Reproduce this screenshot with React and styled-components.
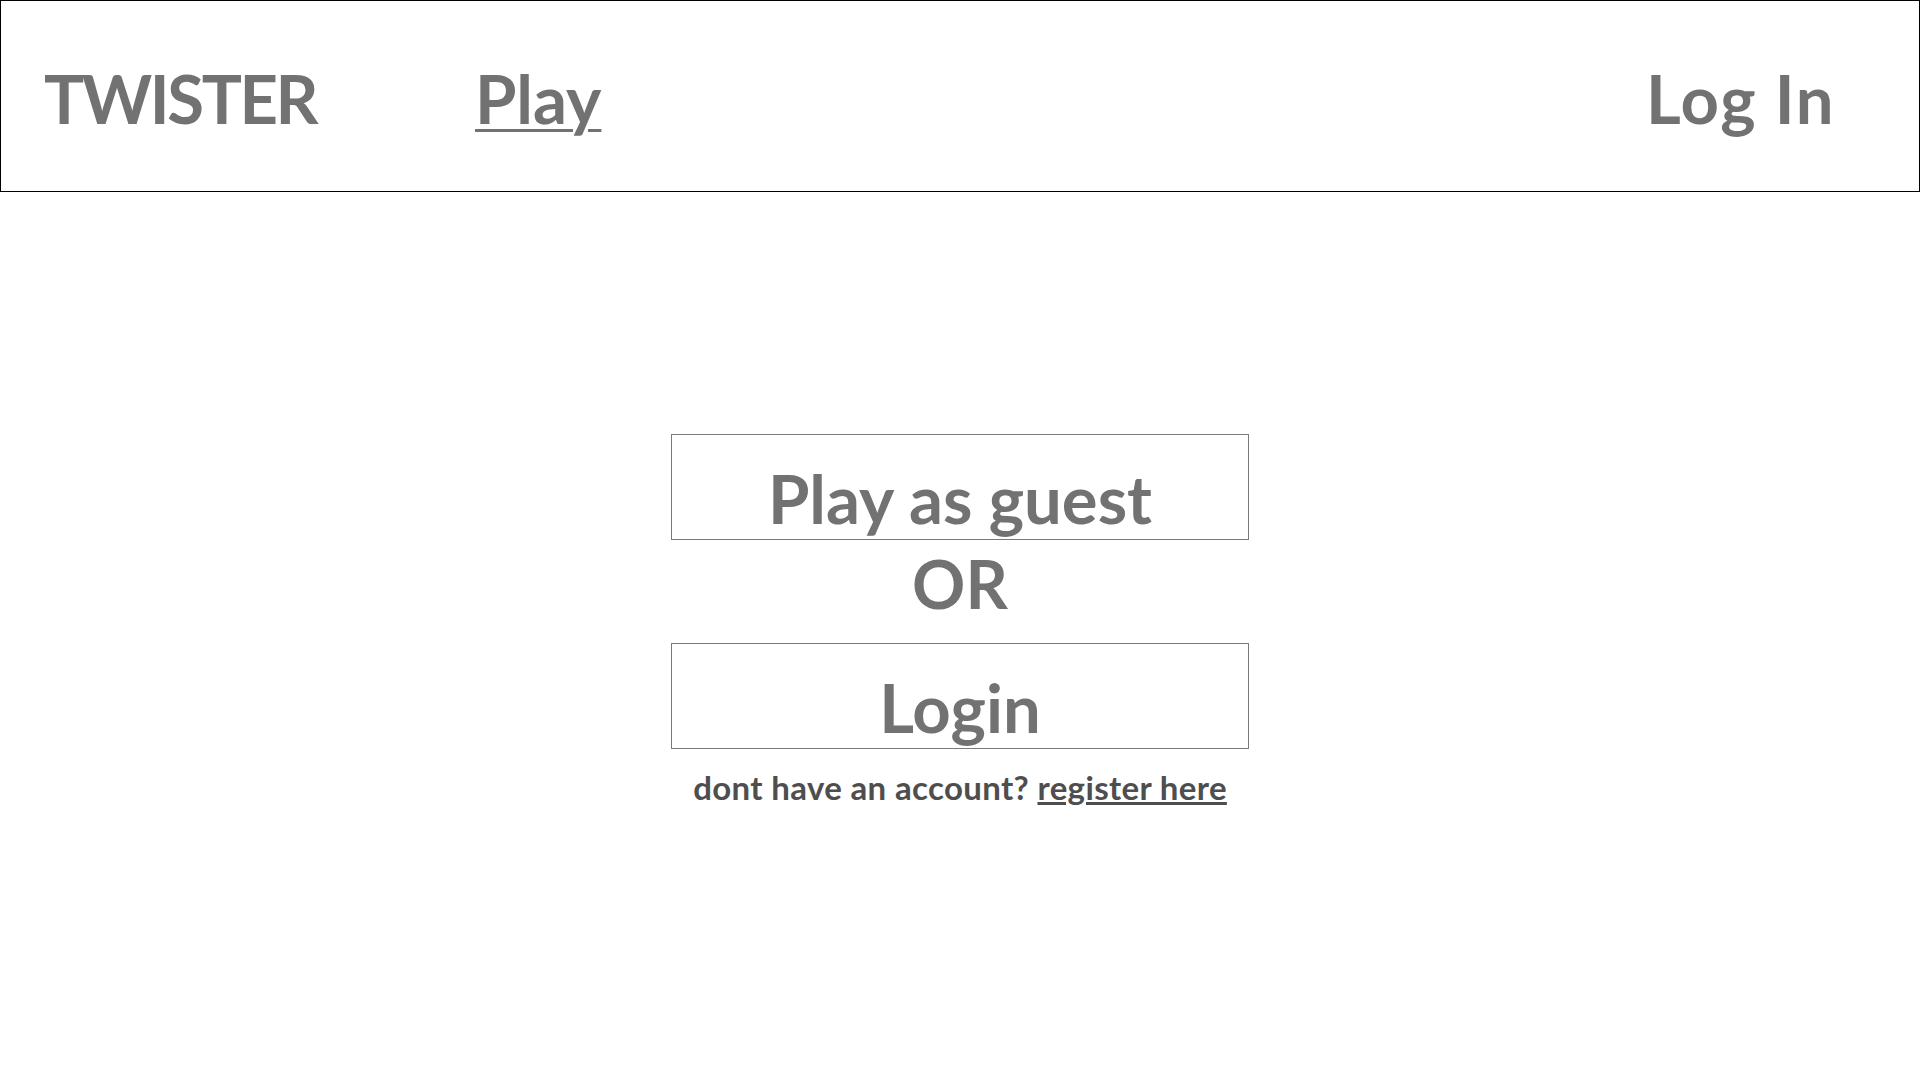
import React from 'react';
import styled, { createGlobalStyle } from 'styled-components';

const GlobalStyle = createGlobalStyle`
    html, body {
        margin: 0;
        padding: 0;
        background: #fff;
    }
    body {
        font-family: Lato, "Open Sans", sans-serif;
        color: #727272;
    }
`;

const Header = styled.header`
    display: flex;
    align-items: center;
    box-sizing: border-box;
    height: 192px;
    border: 1px solid #000;
    padding: 4px 84px 0 43px;
`;

const Brand = styled.div`
    width: 431px;
    font-size: 67px;
    font-weight: 700;
    line-height: 1;
    letter-spacing: -2.4px;
`;

const NavLink = styled.a`
    font-size: 67px;
    font-weight: 700;
    line-height: 1;
    color: inherit;
    letter-spacing: ${p => (p.$active ? '0' : '1.5px')};
    text-decoration: ${p => (p.$active ? 'underline' : 'none')};
    text-decoration-thickness: 3px;
    text-underline-offset: 5px;
    cursor: pointer;
`;

const Spacer = styled.div`
    flex: 1;
`;

const Main = styled.main`
    display: flex;
    flex-direction: column;
    align-items: center;
    padding-top: 242px;
`;

const ChoiceButton = styled.button`
    display: flex;
    align-items: flex-start;
    justify-content: center;
    box-sizing: border-box;
    width: 578px;
    height: 106px;
    padding: 30px 0 0;
    background: #fff;
    border: 1px solid #7a7a7a;
    font-family: inherit;
    font-size: 67px;
    font-weight: 700;
    line-height: 1;
    color: #727272;
    cursor: pointer;
`;

const OrLabel = styled.div`
    font-size: 66px;
    font-weight: 700;
    line-height: 1;
    padding: 11px 0 26px;
`;

const RegisterNote = styled.p`
    margin: 18px 0 0;
    font-size: 33px;
    font-weight: 700;
    letter-spacing: 0.35px;
    color: #4e4e4e;
`;

const RegisterLink = styled.a`
    color: inherit;
    text-decoration: underline;
    text-decoration-thickness: 3px;
    text-underline-offset: 2px;
    cursor: pointer;
`;

export default function App() {
    return (
        <>
            <GlobalStyle />
            <Header>
                <Brand>TWISTER</Brand>
                <NavLink $active>Play</NavLink>
                <Spacer />
                <NavLink>Log In</NavLink>
            </Header>
            <Main>
                <ChoiceButton>Play as guest</ChoiceButton>
                <OrLabel>OR</OrLabel>
                <ChoiceButton>Login</ChoiceButton>
                <RegisterNote>
                    dont have an account? <RegisterLink>register here</RegisterLink>
                </RegisterNote>
            </Main>
        </>
    );
}
